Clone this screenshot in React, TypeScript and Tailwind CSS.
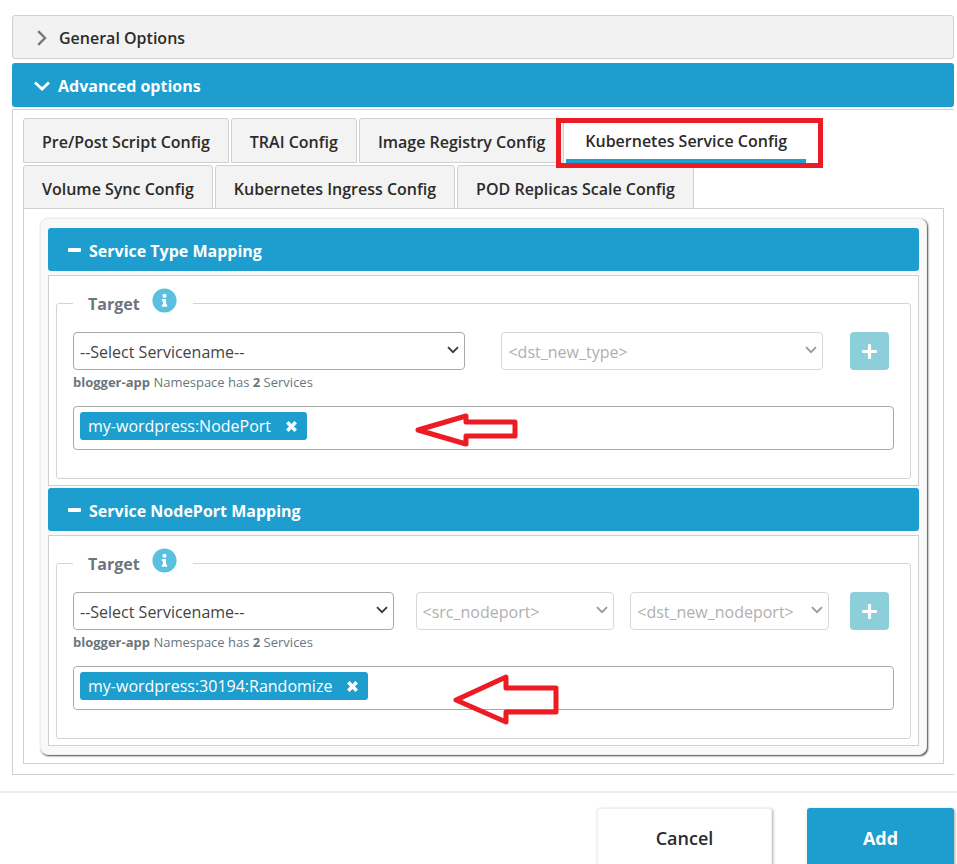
import React from 'react';
import { FaInfoCircle, FaPlus } from 'react-icons/fa';

type Field = {
  label: string;
  placeholder: string;
  className: string;
  disabled?: boolean;
};

const tabs = [
  { label: 'Pre/Post Script Config' },
  { label: 'TRAI Config' },
  { label: 'Image Registry Config' },
  { label: 'Kubernetes Service Config', active: true },
  { label: 'Volume Sync Config' },
  { label: 'Kubernetes Ingress Config' },
  { label: 'POD Replicas Scale Config' },
];

const typeFields: Field[] = [
  { label: 'Service name', placeholder: '--Select Servicename--', className: 'flex-[393] mr-9' },
  { label: 'New type', placeholder: '<dst_new_type>', className: 'flex-[322] mr-[27px]', disabled: true },
];

const portFields: Field[] = [
  { label: 'Service name', placeholder: '--Select Servicename--', className: 'flex-[321] mr-[22px]' },
  { label: 'Source node port', placeholder: '<src_nodeport>', className: 'flex-[199] mr-4', disabled: true },
  { label: 'New node port', placeholder: '<dst_new_nodeport>', className: 'flex-[199] mr-[21px]', disabled: true },
];

const SelectField: React.FC<{ field: Field }> = ({ field }) => (
  <div className={`relative min-w-0 ${field.className}`}>
    <select
      aria-label={field.label}
      disabled={field.disabled}
      className="block w-full h-[38px] appearance-none rounded-[4px] border border-[#a9a9a9] bg-white pl-[6px] pr-6 pt-[2px] text-[#444] disabled:border-[#d8d8d8] disabled:text-[#b0b0b0] disabled:opacity-100"
    >
      <option>{field.placeholder}</option>
    </select>
    <svg
      viewBox="0 0 12 8"
      className={`pointer-events-none absolute right-[6px] top-[14px] h-2 w-3 ${field.disabled ? 'text-[#999]' : 'text-[#343a40]'}`}
      fill="none"
      stroke="currentColor"
      strokeWidth="1.8"
    >
      <path d="M1 1.2 L6 6.2 L11 1.2" />
    </svg>
  </div>
);

const MappingSection: React.FC<{
  title: string;
  fields: Field[];
  tag: string;
  arrow: React.ReactNode;
}> = ({ title, fields, tag, arrow }) => (
  <section>
    <button className="flex h-[43px] w-full items-center gap-2 rounded-[3px] bg-[#1d9ece] pl-5 pt-[2px] font-bold text-white">
      <svg viewBox="0 0 13 4" className="mb-[2px] h-1 w-[13px]">
        <rect width="13" height="4" rx="1" fill="currentColor" />
      </svg>
      {title}
    </button>
    <div className="mt-1 border border-[#d0d0d0] bg-white px-[7px] pb-[6px] pt-[7px]">
      <fieldset className="rounded-[3px] border border-[#d4d4d4] pb-7 pl-4 pr-4">
        <legend className="flex h-10 items-center gap-3 pl-[15px] pr-4 font-bold text-[#6c757d]">
          <span className="pt-[2px]">Target</span>
          <FaInfoCircle className="mb-[5px] h-[25px] w-[25px] text-[#5bc0de]" />
        </legend>
        <div className="mt-[9px] flex pr-[5px]">
          {fields.map((field) => (
            <SelectField key={field.placeholder} field={field} />
          ))}
          <button
            aria-label="Add mapping"
            className="flex h-[38px] w-[39px] flex-none items-center justify-center rounded-[4px] bg-[#8bcfdb] text-white"
          >
            <FaPlus className="h-[17px] w-[17px]" />
          </button>
        </div>
        <p className="mt-[2px] text-[13px] leading-5 text-[#6c757d]">
          <b>blogger-app</b> Namespace has <b>2</b> Services
        </p>
        <div className="relative mt-[14px] flex h-11 items-start rounded-[4px] border border-[#a9a9a9] px-[6px] py-[5px]">
          <span className="flex h-7 items-center gap-[15px] rounded-[3px] bg-[#1d9ece] pl-2 pr-[10px] text-white">
            {tag}
            <button aria-label={`Remove ${tag}`}>
              <svg viewBox="0 0 12 12" className="h-[11px] w-[11px]" stroke="currentColor" strokeWidth="3.8">
                <path d="M1.4 1.4 L10.6 10.6 M10.6 1.4 L1.4 10.6" />
              </svg>
            </button>
          </span>
          {arrow}
        </div>
      </fieldset>
    </div>
  </section>
);

const App: React.FC = () => {
  return (
    <div className="h-screen overflow-hidden bg-white font-['Open_Sans',sans-serif] text-base text-[#2b2b2b]">
      <div className="pl-3 pr-[3px] pt-[15px]">
        {/* Accordion headers */}
        <button className="flex h-11 w-full items-center gap-3 rounded-[3px] border border-[#d0d0d0] bg-[#f2f2f2] pl-6 pt-[2px] font-semibold">
          <svg viewBox="0 0 10 16" className="h-4 w-[10px]" fill="none" stroke="#777" strokeWidth="2.4">
            <path d="M1.2 1.2 L8 8 L1.2 14.8" />
          </svg>
          General Options
        </button>
        <button className="mt-1 flex h-11 w-full items-center gap-2 rounded-[3px] bg-[#1d9ece] pl-[22px] pt-[2px] font-bold text-white">
          <svg viewBox="0 0 16 10" className="h-[10px] w-4" fill="none" stroke="currentColor" strokeWidth="2.8">
            <path d="M1 1.5 L8 8 L15 1.5" />
          </svg>
          Advanced options
        </button>

        <div className="mt-[2px] border border-r-0 border-[#d0d0d0] pb-[10px] pl-[10px] pr-[10px] pt-2">
          {/* Tabs */}
          <div className="flex flex-wrap gap-[2px]" role="tablist">
            {tabs.map((tab) =>
              tab.active ? (
                <div key={tab.label} className="relative z-10">
                  <button
                    role="tab"
                    aria-selected="true"
                    className="h-[45px] border-b-4 border-b-[#1d9ece] bg-white px-[19px] pt-1 font-semibold"
                  >
                    {tab.label}
                  </button>
                  <div className="pointer-events-none absolute -bottom-[5px] -left-[10px] -right-[17px] top-0 border-[5px] border-[#ed1c24]" />
                </div>
              ) : (
                <button
                  key={tab.label}
                  role="tab"
                  aria-selected="false"
                  className="h-[45px] rounded-t-[3px] border border-[#d0d0d0] bg-[#f3f3f3] px-[18px] pt-[2px] font-semibold"
                >
                  {tab.label}
                </button>
              )
            )}
          </div>

          {/* Tab panel */}
          <div className="relative -mt-[2px] border border-[#d0d0d0] bg-white px-4 pb-2 pt-[9px]" role="tabpanel">
            <div className="flex flex-col gap-[2px] rounded-lg border border-[#ededed] bg-[#f9f9f9] px-[7px] pb-2 pt-[9px] shadow-[1px_1px_2px_#444]">
              <MappingSection
                title="Service Type Mapping"
                fields={typeFields}
                tag="my-wordpress:NodePort"
                arrow={
                  <svg viewBox="0 0 104 34" className="absolute left-[341px] top-[6px] h-[34px] w-[104px]" fill="none" stroke="#ed1c24" strokeWidth="5" strokeLinejoin="round">
                    <path d="M3 17 L51 3 V9 H100 V23 H51 V31 Z" />
                  </svg>
                }
              />
              <MappingSection
                title="Service NodePort Mapping"
                fields={portFields}
                tag="my-wordpress:30194:Randomize"
                arrow={
                  <svg viewBox="0 0 106 52" className="absolute left-[379px] top-[7px] h-[52px] w-[106px]" fill="none" stroke="#ed1c24" strokeWidth="5" strokeLinejoin="round">
                    <path d="M3 26 L53 3 V14 H103 V38 H53 V48 Z" />
                  </svg>
                }
              />
            </div>
          </div>
        </div>
      </div>

      {/* Footer actions */}
      <div className="mt-4 flex justify-end gap-[35px] border-t-2 border-[#e9ecf4] pr-[3px] pt-[15px]">
        <button className="h-[60px] w-[175px] rounded-[3px] border border-[#f0f0f0] bg-white text-lg font-semibold shadow-[1px_1px_3px_#aaa]">
          Cancel
        </button>
        <button className="h-[60px] w-[147px] rounded-[3px] bg-[#1d9ece] text-lg font-bold text-white shadow-[1px_1px_3px_#aaa]">
          Add
        </button>
      </div>
    </div>
  );
};

export default App;
